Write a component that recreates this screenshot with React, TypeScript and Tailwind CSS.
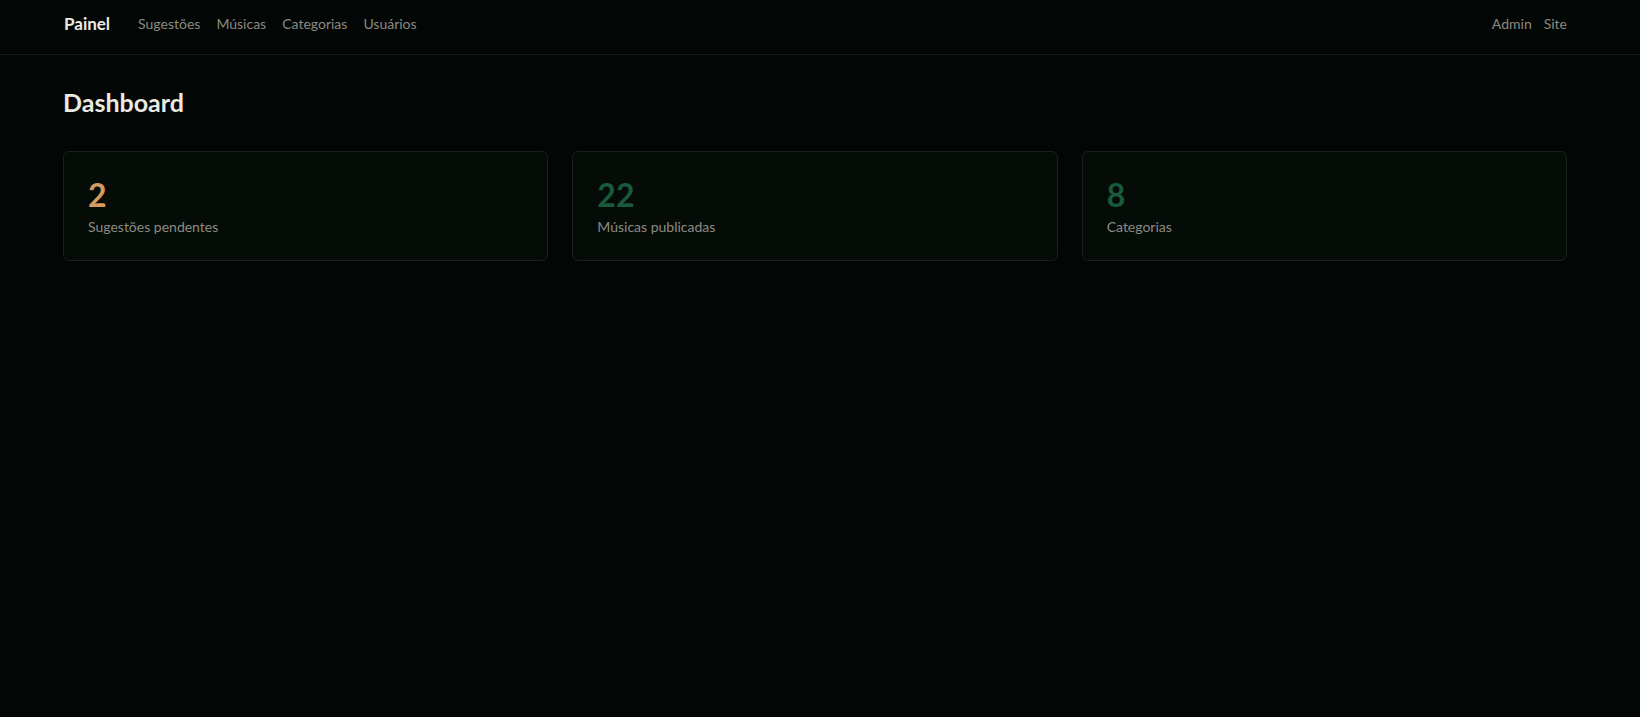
import React from 'react';

const navLinks = ['Sugestões', 'Músicas', 'Categorias', 'Usuários'];

const stats = [
  { value: 2, label: 'Sugestões pendentes', color: 'text-[#d49a5e]' },
  { value: 22, label: 'Músicas publicadas', color: 'text-[#1a5a3c]' },
  { value: 8, label: 'Categorias', color: 'text-[#1a5a3c]' },
];

const StatCard = ({ value, label, color }: { value: number; label: string; color: string }) => (
  <div className="rounded-md border border-[#18211c] bg-[#050c08] px-6 pt-[23px] pb-[23px]">
    <p className={`text-[32px] font-bold leading-[40px] ${color}`}>{value}</p>
    <p className="mt-[2px] text-sm leading-5 text-[#8d8a82]">{label}</p>
  </div>
);

export default function App() {
  return (
    <div
      className="min-h-screen bg-[#020604] text-[#e8e6df]"
      style={{ fontFamily: 'Lato, "Noto Sans", sans-serif' }}
    >
      <header className="h-[55px] border-b border-[#161b18]">
        <div className="flex items-center justify-between pl-[64px] pr-[73px] pt-[12px]">
          <div className="flex items-center">
            <span className="mr-7 text-[17px] font-bold leading-6 text-[#ecebe5]">Painel</span>
            <nav className="flex items-center gap-4 text-sm leading-5 text-[#8d8a82]">
              {navLinks.map((link) => (
                <a key={link} href="#">
                  {link}
                </a>
              ))}
            </nav>
          </div>
          <div className="flex items-center gap-3 text-sm leading-5 text-[#8d8a82]">
            <a href="#">Admin</a>
            <a href="#">Site</a>
          </div>
        </div>
      </header>

      <main className="pl-[63px] pr-[73px] pt-[31px]">
        <h1 className="mb-[33px] text-[25px] font-bold leading-8 text-[#ebe9e2]">Dashboard</h1>
        <div className="grid grid-cols-3 gap-6">
          {stats.map((s) => (
            <StatCard key={s.label} {...s} />
          ))}
        </div>
      </main>
    </div>
  );
}
